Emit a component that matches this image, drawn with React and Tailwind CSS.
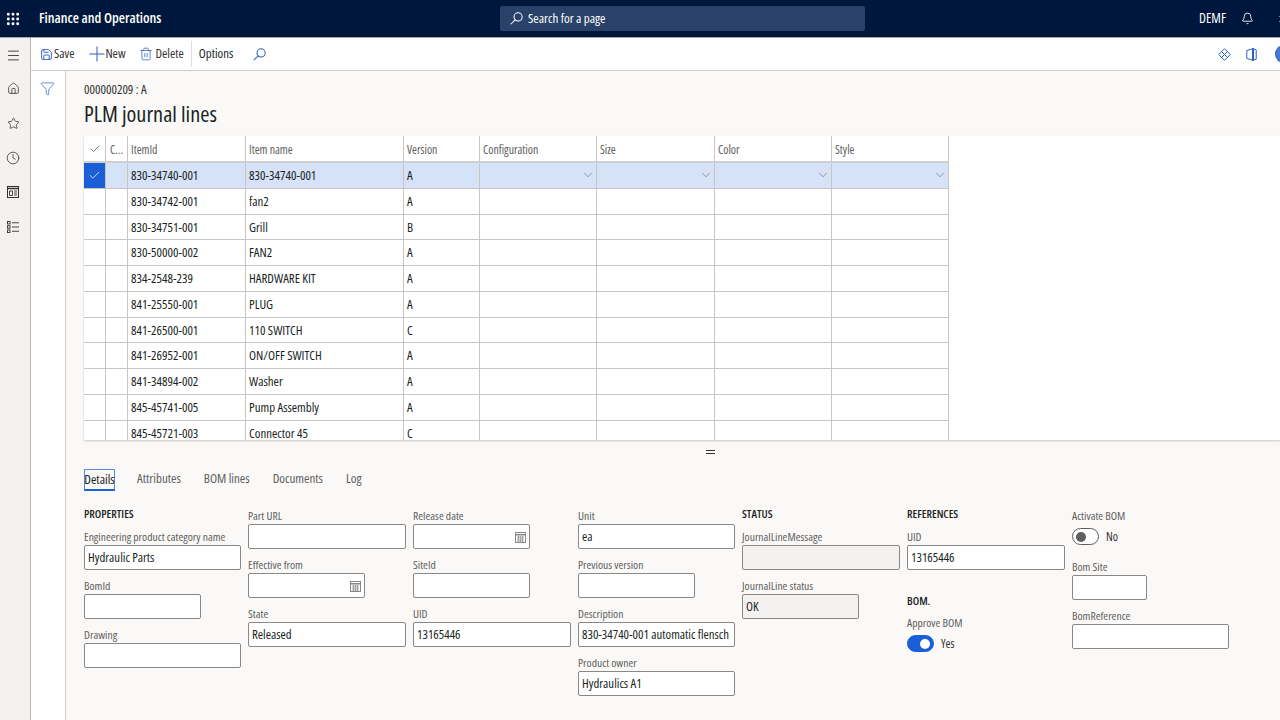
import React from "react";
import { Grip, Menu, Home, Star, Clock, Save, Trash2, Funnel, Bell, Settings, ChevronDown, Check } from "lucide-react";

const rows = [
  ["830-34740-001", "830-34740-001", "A"],
  ["830-34742-001", "fan2", "A"],
  ["830-34751-001", "Grill", "B"],
  ["830-50000-002", "FAN2", "A"],
  ["834-2548-239", "HARDWARE KIT", "A"],
  ["841-25550-001", "PLUG", "A"],
  ["841-26500-001", "110 SWITCH", "C"],
  ["841-26952-001", "ON/OFF SWITCH", "A"],
  ["841-34894-002", "Washer", "A"],
  ["845-45741-005", "Pump Assembly", "A"],
  ["845-45721-003", "Connector 45", "C"],
];

const gridCols = "grid grid-cols-[22px_22px_118px_158px_76px_117px_118px_117px_117px]";

function Cal() {
  return (
    <svg width="11" height="11" viewBox="0 0 11 11" fill="none" stroke="#8a8886" strokeWidth="1">
      <rect x="0.5" y="0.5" width="10" height="10" />
      <path d="M0.5 2.8h10" strokeWidth="1.6" />
      <path d="M2 5h7M2 7h7M2 9h7M3.5 4v6M5.5 4v6M7.5 4v6" strokeWidth="0.7" />
    </svg>
  );
}

function Lens({ size = 14, className = "" }) {
  return (
    <svg width={size} height={size} viewBox="0 0 14 14" fill="none" stroke="currentColor" strokeWidth="1.1" className={className}>
      <circle cx="8.7" cy="5.3" r="4.4" />
      <path d="M5.6 8.4 L0.8 13.2" />
    </svg>
  );
}

function Field({ label, value, w = "w-[158px]", date, gray }) {
  return (
    <div className="mb-1">
      <div className="h-5 leading-[24px] text-[#605e5c] whitespace-nowrap">{label}</div>
      <div className={`${w} h-[25px] border border-[#8a8886] rounded-[2px] ${gray ? "bg-[#f3f2f1]" : "bg-white"} flex items-center justify-between px-[3px] pt-[1px] text-[12.8px] text-[#201f1e] whitespace-nowrap overflow-hidden`}>
        <span>{value}</span>
        {date && <span className="flex"><Cal /></span>}
      </div>
    </div>
  );
}

function Heading({ children, className = "" }) {
  return <div className={`leading-5 text-[11.4px] font-semibold text-[#201f1e] ${className}`}>{children}</div>;
}

function Toggle({ on, label }) {
  return (
    <div className="flex items-center gap-[7px]">
      <div className={`w-[27px] h-[17px] rounded-full border flex items-center px-[3px] ${on ? "bg-[#1a5fd6] border-[#1a5fd6] justify-end" : "bg-white border-[#605e5c] justify-start"}`}>
        <div className={`w-[10px] h-[10px] rounded-full ${on ? "bg-white" : "bg-[#605e5c]"}`} />
      </div>
      <span className="text-[#323130] text-[12px] pt-[1px]">{label}</span>
    </div>
  );
}

function Tool({ icon, label }) {
  return (
    <div className="flex items-center text-[#323130] text-[12.8px]">
      {icon}
      <span>{label}</span>
    </div>
  );
}

export default function App() {
  return (
    <div className="h-[720px] w-[1280px] overflow-hidden flex flex-col bg-[#faf9f8] text-[11.6px] font-stretch-[80%] font-['Open_Sans','Liberation_Sans',sans-serif]">
      {/* top bar */}
      <div className="h-[38px] shrink-0 bg-[#00173d] border-b border-[#a6a5b5] flex items-center text-white">
        <div className="w-[26px] flex justify-center"><Grip size={16} strokeWidth={2.4} /></div>
        <div className="ml-[13px] w-[461px] pb-[2px] text-[14.2px] font-semibold">Finance and Operations</div>
        <div className="w-[365px] h-[25px] bg-[#2a4269] rounded-[2px] flex items-center pl-[10px] gap-[5px] text-[13px] text-white">
          <Lens size={13} />
          <span>Search for a page</span>
        </div>
        <div className="ml-auto flex items-center">
          <span className="text-[13.5px]">DEMF</span>
          <Bell size={13} className="ml-[15px]" strokeWidth={1.6} />
          <Settings size={16} className="ml-[24px] mr-[-14px]" strokeWidth={1.5} />
        </div>
      </div>

      <div className="flex flex-1 min-h-0">
        {/* rail */}
        <div className="w-[31px] shrink-0 bg-[#f3f2f1] border-r border-[#b8b7b6] flex flex-col items-center pt-[10px] pr-[4px] text-[#323130]">
          <Menu size={15} strokeWidth={1.4} />
          <Home size={13} strokeWidth={1.4} className="mt-[19px]" />
          <Star size={13} strokeWidth={1.4} className="mt-[22px]" />
          <Clock size={14} strokeWidth={1.3} className="mt-[21px]" />
          <svg width="12" height="12" viewBox="0 0 12 12" fill="none" stroke="currentColor" className="mt-[21px]">
            <rect x="0.5" y="0.5" width="11" height="11" />
            <path d="M0.5 2.5h11" strokeWidth="1.5" />
            <path d="M2.5 5h3v4.5h-3zM7 5h3M7 7h3M7 9h3" strokeWidth="0.9" />
          </svg>
          <svg width="12" height="12" viewBox="0 0 12 12" fill="none" stroke="currentColor" strokeWidth="0.9" className="mt-[23px]">
            <rect x="0.5" y="0.5" width="2.5" height="2.5" />
            <rect x="0.5" y="4.75" width="2.5" height="2.5" />
            <rect x="0.5" y="9" width="2.5" height="2.5" />
            <path d="M5 1.75h7M5 6h7M5 10.25h7" />
          </svg>
        </div>

        <div className="flex-1 min-w-0 flex flex-col">
          {/* toolbar */}
          <div className="h-[33px] shrink-0 bg-white border-b border-[#d2d0ce] flex items-center pl-[9px]">
            <Tool icon={<Save size={13} strokeWidth={1.7} className="text-[#2b5fc0] mr-[1px]" />} label="Save" />
            <div className="ml-[15px]">
              <Tool
                icon={
                  <svg width="16" height="16" viewBox="0 0 16 16" fill="none" stroke="#2b5fc0" strokeWidth="1">
                    <path d="M8 0.5v15M0.5 8h15" />
                  </svg>
                }
                label="New"
              />
            </div>
            <div className="ml-[13px]"><Tool icon={<Trash2 size={14} strokeWidth={1.3} className="text-[#2b5fc0] mr-[3px]" />} label="Delete" /></div>
            <div className="ml-[7px] w-px h-[26px] bg-[#e1dfdd]" />
            <span className="ml-[7px] text-[12.8px] text-[#201f1e]">Options</span>
            <Lens size={13} className="ml-[20px] text-[#2b5fc0]" />
            <div className="ml-auto flex items-center text-[#2b5fc0]">
              <svg width="13" height="13" viewBox="0 0 13 13" fill="none" stroke="currentColor" strokeWidth="1">
                <path d="M6.5 0.7 L12.3 6.5 L6.5 12.3 L0.7 6.5 Z" />
                <path d="M3.6 3.6 L9.4 9.4 M9.4 3.6 L3.6 9.4" />
              </svg>
              <svg width="11" height="13" viewBox="0 0 11 13" fill="none" stroke="currentColor" strokeWidth="1" className="ml-[15px]">
                <path d="M0.8 2.6 L7 0.6 L10.2 1.8 V11.2 L7 12.4 L0.8 10.4 Z" />
                <path d="M7 0.6 V12.4" strokeWidth="2" />
              </svg>
              <div className="ml-[18px] w-[12px] h-[18px] mr-[-7px] rounded-l-full bg-[#4a78d0] border-y border-l border-[#2b5fc0]" />
            </div>
          </div>

          <div className="flex flex-1 min-h-0">
            {/* filter rail */}
            <div className="w-[35px] shrink-0 bg-white border-r border-[#d2d0ce] flex justify-center pt-[10px] pr-[2px]">
              <Funnel size={15} strokeWidth={1.1} className="text-[#2b5fc0]" />
            </div>

            {/* content */}
            <div className="flex-1 min-w-0 pl-[18px] flex flex-col">
              <div className="mt-[11px] h-[15px] leading-[15px] text-[12.9px] text-[#323130]">000000209 : A</div>
              <div className="mt-[3px] h-[28px] leading-[28px] text-[22.3px] text-[#201f1e]">PLM journal lines</div>

              {/* grid */}
              <div className="mt-[8px] h-[304px] shrink-0 bg-white overflow-hidden shadow-[0_1px_2px_rgba(0,0,0,0.2)] text-[#201f1e]">
                <div className={`${gridCols} w-[865px] h-[27px] border-b-2 border-[#d2d0ce] text-[11.8px] text-[#605e5c]`}>
                  <div className="border-r border-[#c8c6c4] flex items-center justify-center"><Check size={12} strokeWidth={1.3} className="text-[#323130]" /></div>
                  <div className="border-r border-[#c8c6c4] flex items-center pl-1 pt-[3px]">C...</div>
                  {["ItemId", "Item name", "Version", "Configuration", "Size", "Color", "Style"].map((h) => (
                    <div key={h} className="border-r border-[#c8c6c4] flex items-center pl-[3px] pt-[3px]">{h}</div>
                  ))}
                </div>
                {rows.map((r, i) => (
                  <div key={r[0]} className={`${gridCols} w-[865px] h-[25.75px] border-b border-[#c8c6c4] text-[12.9px] ${i === 0 ? "bg-[#d5e2f8]" : ""}`}>
                    <div className={`border-r border-[#c8c6c4] flex items-center justify-center ${i === 0 ? "bg-[#1a5fd6] text-white" : ""}`}>
                      {i === 0 && <Check size={13} strokeWidth={1.4} />}
                    </div>
                    <div className="border-r border-[#c8c6c4]" />
                    <div className="border-r border-[#c8c6c4] flex items-center pl-[3px] pt-[1px]">{r[0]}</div>
                    <div className="border-r border-[#c8c6c4] flex items-center pl-[3px] pt-[1px]">{r[1]}</div>
                    <div className="border-r border-[#c8c6c4] flex items-center pl-[3px] pt-[1px]">{r[2]}</div>
                    {[0, 1, 2, 3].map((k) => (
                      <div key={k} className="border-r border-[#c8c6c4] flex items-center justify-end pr-[1px] text-[#605e5c]">
                        {i === 0 && <ChevronDown size={14} strokeWidth={1} />}
                      </div>
                    ))}
                  </div>
                ))}
              </div>

              {/* splitter */}
              <div className="h-[24px] shrink-0 flex flex-col items-center justify-center gap-[2px] pl-[56px]">
                <div className="w-[9px] h-px bg-[#323130]" />
                <div className="w-[9px] h-px bg-[#323130]" />
              </div>

              {/* tabs */}
              <div className="mt-[5px] flex items-start h-[22px] leading-[18px] text-[13px] text-[#605e5c]">
                <div className="w-[31px] h-[22px] flex items-start justify-center text-[#201f1e] border border-[#5b87d8] border-b-2 border-b-[#1a5fd6] whitespace-nowrap">Details</div>
                <span className="ml-[22px]">Attributes</span>
                <span className="ml-[23px]">BOM lines</span>
                <span className="ml-[23px]">Documents</span>
                <span className="ml-[23px]">Log</span>
              </div>

              {/* form */}
              <div className="mt-[13px] grid grid-cols-[164px_165px_165px_164px_165px_165px_165px]">
                <div>
                  <Heading className="h-[21px]">PROPERTIES</Heading>
                  <Field label="Engineering product category name" value="Hydraulic Parts" w="w-[157px]" />
                  <Field label="BomId" value="" w="w-[117px]" />
                  <Field label="Drawing" value="" w="w-[157px]" />
                </div>
                <div>
                  <Field label="Part URL" value="" />
                  <Field label="Effective from" value="" w="w-[117px]" date />
                  <Field label="State" value="Released" />
                </div>
                <div>
                  <Field label="Release date" value="" w="w-[117px]" date />
                  <Field label="SiteId" value="" w="w-[117px]" />
                  <Field label="UID" value="13165446" />
                </div>
                <div>
                  <Field label="Unit" value="ea" w="w-[157px]" />
                  <Field label="Previous version" value="" w="w-[117px]" />
                  <Field label="Description" value="830-34740-001 automatic flensch" w="w-[157px]" />
                  <Field label="Product owner" value="Hydraulics A1" w="w-[157px]" />
                </div>
                <div>
                  <Heading className="h-[21px]">STATUS</Heading>
                  <Field label="JournalLineMessage" value="" gray />
                  <Field label="JournalLine status" value="OK" w="w-[117px]" gray />
                </div>
                <div>
                  <Heading className="h-[21px]">REFERENCES</Heading>
                  <Field label="UID" value="13165446" />
                  <Heading className="h-[20px] mt-[21px]">BOM.</Heading>
                  <div className="h-5 leading-[24px] text-[#605e5c]">Approve BOM</div>
                  <div className="mt-[3px]"><Toggle on label="Yes" /></div>
                </div>
                <div>
                  <div className="h-5 leading-[24px] text-[#605e5c]">Activate BOM</div>
                  <div className="mt-[3px] mb-[9px]"><Toggle label="No" /></div>
                  <Field label="Bom Site" value="" w="w-[75px]" />
                  <Field label="BomReference" value="" w="w-[157px]" />
                </div>
              </div>
            </div>
          </div>
        </div>
      </div>
    </div>
  );
}
